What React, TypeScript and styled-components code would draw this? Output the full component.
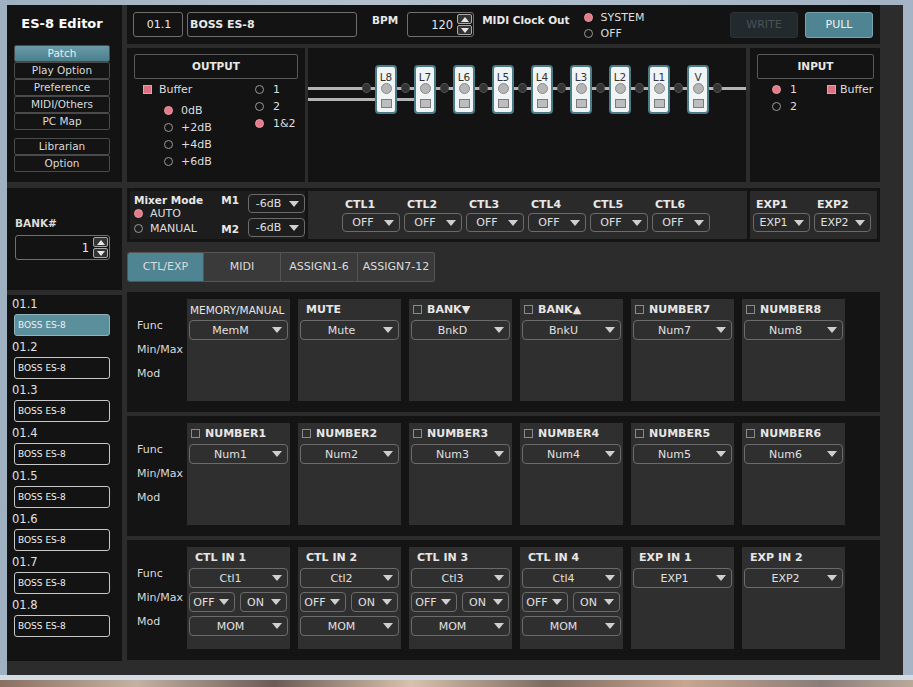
import React from "react";
import styled, { createGlobalStyle } from "styled-components";

const GlobalStyle = createGlobalStyle`
  html, body { margin: 0; padding: 0; }
  body {
    width: 913px;
    height: 687px;
    overflow: hidden;
    background: #a6b4c2;
    font-family: "DejaVu Sans", Verdana, sans-serif;
    font-size: 11px;
    color: #dcdcdc;
  }
  * { box-sizing: border-box; }
`;

const Window = styled.div`
  width: 913px;
  height: 687px;
  padding: 5px 0 0 7px;
  display: flex;
  flex-direction: column;
  background: linear-gradient(to right, #9fb0c0, #b2c0cd 40%, #a4b4c4);
`;

const AppBox = styled.div`
  width: 896px;
  height: 670px;
  background: #2c2c2c;
  display: flex;
  gap: 5px;
  padding: 0 23px 14px 0;
`;

const FrameBottom = styled.div`
  height: 5px;
  margin-left: -7px;
  background: #d3dce4;
`;

const Desktop = styled.div`
  flex: 1;
  margin-left: -7px;
  background: linear-gradient(
    to right,
    #8b7062,
    #c4b1a2 15%,
    #6c5a55 30%,
    #d8c2ad 45%,
    #7d6a60 60%,
    #c8a58e 75%,
    #8a7c78 90%,
    #b9a99b
  );
`;

/* ---------- left column ---------- */

const LeftCol = styled.div`
  width: 115px;
  display: flex;
  flex-direction: column;
  gap: 6px;
`;

const Panel = styled.div`
  background: #131313;
`;

const TitlePanel = styled(Panel)`
  height: 177px;
  padding: 11px 0 0 7px;
`;

const Title = styled.div`
  width: 96px;
  text-align: center;
  font-weight: bold;
  font-size: 13px;
  line-height: 16px;
  color: #fff;
  margin-bottom: 13px;
`;

const NavGroup = styled.div`
  display: flex;
  flex-direction: column;
  margin-bottom: 8px;
`;

const NavButton = styled.div<{ $active?: boolean }>`
  width: 96px;
  height: 17px;
  border: 1px solid #4a4a4a;
  border-radius: 2px;
  background: ${(p) =>
    p.$active ? "linear-gradient(#6a9ba7, #4b7f8c)" : "#141414"};
  color: ${(p) => (p.$active ? "#e6eef0" : "#dadada")};
  font-size: 10.5px;
  line-height: 15px;
  text-align: center;
`;

const BankPanel = styled(Panel)`
  height: 102px;
  padding: 28px 0 0 8px;
`;

const BankLabel = styled.div`
  font-weight: bold;
  font-size: 10.5px;
  line-height: 14px;
  margin-bottom: 5px;
`;

const NumInput = styled.div<{ $w: number }>`
  width: ${(p) => p.$w}px;
  height: 25px;
  border: 1px solid #707070;
  border-radius: 3px;
  display: flex;
  align-items: center;
  justify-content: flex-end;
  padding-right: 1px;
  gap: 4px;
  font-size: 11.5px;
  color: #e4e4e4;
`;

const Spinner = styled.div`
  display: flex;
  flex-direction: column;
  gap: 1px;
`;

const SpinHalf = styled.div<{ $up?: boolean }>`
  width: 15px;
  height: 10px;
  border: 1px solid #a8a8a8;
  border-radius: 2px;
  background: #333;
  display: flex;
  align-items: center;
  justify-content: center;
  &::after {
    content: "";
    border-left: 4px solid transparent;
    border-right: 4px solid transparent;
    ${(p) =>
      p.$up ? "border-bottom: 5px solid #e6e6e6;" : "border-top: 5px solid #e6e6e6;"}
  }
`;

const ListPanel = styled(Panel)`
  flex: 1;
  padding: 0 0 0 7px;
  margin-top: -1px;
`;

const PatchNo = styled.div`
  height: 19px;
  line-height: 19px;
  margin-left: -2px;
  font-size: 11.5px;
  color: #e0e0e0;
`;

const PatchBox = styled.div<{ $active?: boolean }>`
  width: 96px;
  height: 22px;
  margin-bottom: 2px;
  border: 1px solid ${(p) => (p.$active ? "#8fb4be" : "#c8c8c8")};
  border-radius: 3px;
  background: ${(p) => (p.$active ? "#5b8f9c" : "#131313")};
  padding-left: 3px;
  font-size: 9px;
  line-height: 20px;
  color: #f0f0f0;
`;

/* ---------- main column ---------- */

const MainCol = styled.div`
  width: 753px;
  display: flex;
  flex-direction: column;
`;

const Header = styled(Panel)`
  height: 39px;
  margin-bottom: 4px;
  display: flex;
  align-items: center;
  padding: 0 7px 0 6px;
`;

const Box = styled.div<{ $w: number; $bold?: boolean; $center?: boolean }>`
  width: ${(p) => p.$w}px;
  height: 25px;
  border: 1px solid #6e6e6e;
  border-radius: 3px;
  line-height: 23px;
  padding-left: 2px;
  text-align: ${(p) => (p.$center ? "center" : "left")};
  font-weight: ${(p) => (p.$bold ? "bold" : "normal")};
  color: #e8e8e8;
  margin-right: 4px;
`;

const HeadLabel = styled.span<{ $ml: number; $mr: number }>`
  font-weight: bold;
  font-size: 10.5px;
  color: #e8e8e8;
  margin-left: ${(p) => p.$ml}px;
  margin-right: ${(p) => p.$mr}px;
  align-self: flex-start;
  margin-top: 9px;
`;

const RadioStack = styled.div`
  display: flex;
  flex-direction: column;
  margin-top: 2px;
`;

const RadioRow = styled.div<{ $h?: number; $gap?: number }>`
  display: flex;
  align-items: center;
  gap: ${(p) => p.$gap ?? 8}px;
  height: ${(p) => p.$h ?? 17}px;
  font-size: 11px;
  color: #dedede;
`;

const Radio = styled.span<{ $on?: boolean }>`
  width: 9px;
  height: 9px;
  border-radius: 50%;
  flex-shrink: 0;
  background: ${(p) => (p.$on ? "#e47b8b" : "transparent")};
  border: 1px solid ${(p) => (p.$on ? "#ea99a4" : "#9a9a9a")};
`;

const Check = styled.span<{ $on?: boolean }>`
  width: 9px;
  height: 9px;
  flex-shrink: 0;
  background: ${(p) => (p.$on ? "#dc7281" : "transparent")};
  border: 1px solid ${(p) => (p.$on ? "#eb9ea8" : "#8a8a8a")};
`;

const Button = styled.div<{ $primary?: boolean }>`
  width: 68px;
  height: 26px;
  border-radius: 3px;
  border: 1px solid ${(p) => (p.$primary ? "#79a4af" : "#2d3438")};
  background: ${(p) => (p.$primary ? "#4f8492" : "#232a2d")};
  color: ${(p) => (p.$primary ? "#eef4f6" : "#485357")};
  text-align: center;
  line-height: 24px;
  font-size: 11px;
  margin-left: ${(p) => (p.$primary ? "7px" : "auto")};
`;

const Row1 = styled.div`
  height: 134px;
  display: flex;
  margin-bottom: 6px;
`;

const OutputPanel = styled(Panel)`
  width: 178px;
  margin-right: 3px;
  padding: 6px 7px 0 7px;
`;

const InputPanel = styled(Panel)`
  width: 130px;
  margin-left: 4px;
  padding: 6px 6px 0 7px;
`;

const PanelTitle = styled.div`
  height: 25px;
  border: 1px solid #5a5a5a;
  border-radius: 2px;
  text-align: center;
  line-height: 23px;
  font-weight: bold;
  font-size: 10.5px;
  color: #e8e8e8;
`;

const OutBody = styled.div`
  display: flex;
  padding: 2px 0 0 9px;
`;

const OutLeft = styled.div`
  width: 112px;
  display: flex;
  flex-direction: column;
`;

const DbList = styled.div`
  padding: 4px 0 0 21px;
  display: flex;
  flex-direction: column;
`;

const InBody = styled.div`
  display: flex;
  padding: 2px 0 0 15px;
`;

const InRadios = styled.div`
  width: 55px;
  display: flex;
  flex-direction: column;
`;

const ChainPanel = styled(Panel)`
  width: 438px;
  position: relative;
  padding: 17px 0 0 54px;
`;

const Rail = styled.div<{ $top: number; $w?: number }>`
  position: absolute;
  left: 0;
  top: ${(p) => p.$top}px;
  width: ${(p) => (p.$w ? `${p.$w}px` : "100%")};
  height: 3px;
  background: #b4b4b4;
`;

const ChainRow = styled.div`
  position: relative;
  display: flex;
  align-items: flex-start;
  gap: 4px;
`;

const ChainDot = styled.span`
  width: 9px;
  height: 10px;
  margin-top: 18px;
  border-radius: 50%;
  background: #343434;
  border: 1px solid #555;
`;

const Effect = styled.div`
  width: 22px;
  height: 49px;
  border: 2px solid #4b7d89;
  border-radius: 4px;
  background: #f1f4f5;
  display: flex;
  flex-direction: column;
  align-items: center;
`;

const EffectName = styled.span`
  font-size: 10.5px;
  line-height: 12px;
  margin-top: 4px;
  color: #333;
`;

const Knob = styled.span`
  width: 11px;
  height: 11px;
  border-radius: 50%;
  background: #b6b6b6;
  border: 1px solid #8a8a8a;
`;

const Pad = styled.span`
  width: 11px;
  height: 9px;
  margin-top: 5px;
  background: #bdbdbd;
  border: 1px solid #7a7a7a;
`;

/* ---------- mixer / ctl strip ---------- */

const Strip = styled.div`
  height: 54px;
  background: #141414;
  padding: 3px;
  display: flex;
  gap: 3px;
`;

const MixerPanel = styled.div`
  width: 175px;
  background: #1d1d1d;
  display: flex;
  padding: 3px 0 0 4px;
`;

const MixerLeft = styled.div`
  width: 88px;
`;

const SmallBold = styled.div`
  font-weight: bold;
  font-size: 10.5px;
  line-height: 12px;
  color: #e8e8e8;
`;

const MixerRight = styled.div`
  display: flex;
  flex-direction: column;
  gap: 5px;
`;

const MRow = styled.div<{ $lt?: number }>`
  display: flex;
  align-items: flex-start;
  gap: 9px;
  ${SmallBold} {
    margin-top: ${(p) => p.$lt ?? 0}px;
  }
`;

const CtlPanel = styled.div<{ $w: number; $pl: number }>`
  width: ${(p) => p.$w}px;
  background: #2a2a2a;
  display: flex;
  gap: 4px;
  padding: 8px 0 0 ${(p) => p.$pl}px;
`;

const CtlCol = styled.div`
  display: flex;
  flex-direction: column;
  gap: 2px;
  ${SmallBold} {
    padding-left: 3px;
    font-size: 11px;
  }
`;

const Sel = styled.div<{ $w?: number; $h?: number }>`
  width: ${(p) => (p.$w ? `${p.$w}px` : "100%")};
  height: ${(p) => p.$h ?? 20}px;
  flex-shrink: 0;
  border: 1px solid #6b6b6b;
  border-radius: 4px;
  display: flex;
  align-items: center;
  gap: 3px;
  padding: 0 5px 0 2px;
  font-size: 11px;
  color: #e0e0e0;
`;

const SelText = styled.span`
  flex: 1;
  text-align: center;
  white-space: nowrap;
`;

const Arrow = styled.span`
  width: 0;
  height: 0;
  flex-shrink: 0;
  border-left: 5px solid transparent;
  border-right: 5px solid transparent;
  border-top: 6px solid #cfcfcf;
`;

const Select = ({ value, w, h }: { value: string; w?: number; h?: number }) => (
  <Sel $w={w} $h={h}>
    <SelText>{value}</SelText>
    <Arrow />
  </Sel>
);

/* ---------- tabs ---------- */

const TabBar = styled.div`
  display: flex;
  padding: 10px 0;
`;

const Tab = styled.div<{ $active?: boolean }>`
  width: 77px;
  height: 30px;
  border: 1px solid #555;
  border-left-width: ${(p) => (p.$active ? 1 : 0)}px;
  background: ${(p) => (p.$active ? "#4f8492" : "#3a3a3a")};
  color: #dcdcdc;
  text-align: center;
  line-height: 28px;
  font-size: 11px;
  &:first-child {
    border-radius: 3px 0 0 3px;
  }
  &:last-child {
    border-radius: 0 3px 3px 0;
  }
`;

/* ---------- assign sections ---------- */

const Sections = styled.div`
  display: flex;
  flex-direction: column;
  gap: 4px;
`;

const Section = styled.div`
  height: 120px;
  background: #141414;
  display: flex;
  padding: 7px 0 0 10px;
`;

const LabelCol = styled.div`
  width: 50px;
  padding-top: 17px;
  display: flex;
  flex-direction: column;
  gap: 4px;
`;

const RowLabel = styled.div`
  height: 20px;
  line-height: 20px;
  font-size: 11px;
  color: #dadada;
  white-space: nowrap;
`;

const Cards = styled.div`
  display: flex;
  gap: 8px;
`;

const Card = styled.div`
  width: 103px;
  height: 102px;
  background: #2f2f2f;
  padding: 0 2px;
  display: flex;
  flex-direction: column;
  gap: 4px;
`;

const CardHead = styled.div<{ $bold?: boolean; $indent: number }>`
  height: 13px;
  display: flex;
  align-items: center;
  gap: 5px;
  padding-left: ${(p) => p.$indent}px;
  padding-top: 4px;
  box-sizing: content-box;
  font-weight: ${(p) => (p.$bold ? "bold" : "normal")};
  font-size: ${(p) => (p.$bold ? "11px" : "10.5px")};
  color: #e6e6e6;
  white-space: nowrap;
`;

const SelPair = styled.div`
  display: flex;
  gap: 5px;
`;

type CardDef = {
  title: string;
  kind: "plain" | "bold" | "check";
  func: string;
  ctl?: boolean;
};

const sec1: CardDef[] = [
  { title: "MEMORY/MANUAL", kind: "plain", func: "MemM" },
  { title: "MUTE", kind: "bold", func: "Mute" },
  { title: "BANK▼", kind: "check", func: "BnkD" },
  { title: "BANK▲", kind: "check", func: "BnkU" },
  { title: "NUMBER7", kind: "check", func: "Num7" },
  { title: "NUMBER8", kind: "check", func: "Num8" },
];

const sec2: CardDef[] = [1, 2, 3, 4, 5, 6].map((n) => ({
  title: `NUMBER${n}`,
  kind: "check",
  func: `Num${n}`,
}));

const sec3: CardDef[] = [
  ...[1, 2, 3, 4].map((n) => ({
    title: `CTL IN ${n}`,
    kind: "bold" as const,
    func: `Ctl${n}`,
    ctl: true,
  })),
  { title: "EXP IN 1", kind: "bold", func: "EXP1" },
  { title: "EXP IN 2", kind: "bold", func: "EXP2" },
];

const AssignCard = ({ c }: { c: CardDef }) => (
  <Card>
    <CardHead
      $bold={c.kind !== "plain"}
      $indent={c.kind === "plain" ? 1 : c.kind === "check" ? 2 : 6}
    >
      {c.kind === "check" && <Check />}
      {c.title}
    </CardHead>
    <Select value={c.func} />
    {c.ctl && (
      <>
        <SelPair>
          <Select value="OFF" w={46} />
          <Select value="ON" w={47} />
        </SelPair>
        <Select value="MOM" />
      </>
    )}
  </Card>
);

const AssignSection = ({ cards }: { cards: CardDef[] }) => (
  <Section>
    <LabelCol>
      <RowLabel>Func</RowLabel>
      <RowLabel>Min/Max</RowLabel>
      <RowLabel>Mod</RowLabel>
    </LabelCol>
    <Cards>
      {cards.map((c) => (
        <AssignCard key={c.title} c={c} />
      ))}
    </Cards>
  </Section>
);

const chain = ["L8", "L7", "L6", "L5", "L4", "L3", "L2", "L1", "V"];

export default function App() {
  return (
    <>
      <GlobalStyle />
      <Window>
        <AppBox>
          <LeftCol>
            <TitlePanel>
              <Title>ES-8 Editor</Title>
              <NavGroup>
                {["Patch", "Play Option", "Preference", "MIDI/Others", "PC Map"].map(
                  (n, i) => (
                    <NavButton key={n} $active={i === 0}>
                      {n}
                    </NavButton>
                  )
                )}
              </NavGroup>
              <NavGroup>
                <NavButton>Librarian</NavButton>
                <NavButton>Option</NavButton>
              </NavGroup>
            </TitlePanel>
            <BankPanel>
              <BankLabel>BANK#</BankLabel>
              <NumInput $w={95}>
                1
                <Spinner>
                  <SpinHalf $up />
                  <SpinHalf />
                </Spinner>
              </NumInput>
            </BankPanel>
            <ListPanel>
              {[1, 2, 3, 4, 5, 6, 7, 8].map((n) => (
                <div key={n}>
                  <PatchNo>01.{n}</PatchNo>
                  <PatchBox $active={n === 1}>BOSS ES-8</PatchBox>
                </div>
              ))}
            </ListPanel>
          </LeftCol>

          <MainCol>
            <Header>
              <Box $w={50} $center>
                01.1
              </Box>
              <Box $w={170} $bold>
                BOSS ES-8
              </Box>
              <HeadLabel $ml={11} $mr={9}>
                BPM
              </HeadLabel>
              <NumInput $w={67}>
                120
                <Spinner>
                  <SpinHalf $up />
                  <SpinHalf />
                </Spinner>
              </NumInput>
              <HeadLabel $ml={8} $mr={14}>
                MIDI Clock Out
              </HeadLabel>
              <RadioStack>
                <RadioRow $h={16}>
                  <Radio $on />
                  SYSTEM
                </RadioRow>
                <RadioRow $h={16}>
                  <Radio />
                  OFF
                </RadioRow>
              </RadioStack>
              <Button>WRITE</Button>
              <Button $primary>PULL</Button>
            </Header>

            <Row1>
              <OutputPanel>
                <PanelTitle>OUTPUT</PanelTitle>
                <OutBody>
                  <OutLeft>
                    <RadioRow $gap={7}>
                      <Check $on />
                      Buffer
                    </RadioRow>
                    <DbList>
                      {["0dB", "+2dB", "+4dB", "+6dB"].map((d, i) => (
                        <RadioRow key={d}>
                          <Radio $on={i === 0} />
                          {d}
                        </RadioRow>
                      ))}
                    </DbList>
                  </OutLeft>
                  <div>
                    {["1", "2", "1&2"].map((d, i) => (
                      <RadioRow key={d} $gap={9}>
                        <Radio $on={i === 2} />
                        {d}
                      </RadioRow>
                    ))}
                  </div>
                </OutBody>
              </OutputPanel>

              <ChainPanel>
                <Rail $top={39} />
                <Rail $top={50} $w={107} />
                <ChainRow>
                  {chain.map((c) => (
                    <React.Fragment key={c}>
                      <ChainDot />
                      <Effect>
                        <EffectName>{c}</EffectName>
                        <Knob />
                        <Pad />
                      </Effect>
                    </React.Fragment>
                  ))}
                  <ChainDot />
                </ChainRow>
              </ChainPanel>

              <InputPanel>
                <PanelTitle>INPUT</PanelTitle>
                <InBody>
                  <InRadios>
                    <RadioRow $gap={9}>
                      <Radio $on />1
                    </RadioRow>
                    <RadioRow $gap={9}>
                      <Radio />2
                    </RadioRow>
                  </InRadios>
                  <RadioRow $gap={4}>
                    <Check $on />
                    Buffer
                  </RadioRow>
                </InBody>
              </InputPanel>
            </Row1>

            <Strip>
              <MixerPanel>
                <MixerLeft>
                  <SmallBold>Mixer Mode</SmallBold>
                  <RadioRow $h={15} $gap={7}>
                    <Radio $on />
                    AUTO
                  </RadioRow>
                  <RadioRow $h={15} $gap={7}>
                    <Radio />
                    MANUAL
                  </RadioRow>
                </MixerLeft>
                <MixerRight>
                  <MRow>
                    <SmallBold>M1</SmallBold>
                    <Select value="-6dB" w={57} h={19} />
                  </MRow>
                  <MRow $lt={5}>
                    <SmallBold>M2</SmallBold>
                    <Select value="-6dB" w={57} h={19} />
                  </MRow>
                </MixerRight>
              </MixerPanel>
              <CtlPanel $w={439} $pl={34}>
                {[1, 2, 3, 4, 5, 6].map((n) => (
                  <CtlCol key={n}>
                    <SmallBold>CTL{n}</SmallBold>
                    <Select value="OFF" w={58} h={19} />
                  </CtlCol>
                ))}
              </CtlPanel>
              <CtlPanel $w={127} $pl={3}>
                {[1, 2].map((n) => (
                  <CtlCol key={n}>
                    <SmallBold>EXP{n}</SmallBold>
                    <Select value={`EXP${n}`} w={57} h={19} />
                  </CtlCol>
                ))}
              </CtlPanel>
            </Strip>

            <TabBar>
              <Tab $active>CTL/EXP</Tab>
              <Tab>MIDI</Tab>
              <Tab>ASSIGN1-6</Tab>
              <Tab>ASSIGN7-12</Tab>
            </TabBar>

            <Sections>
              <AssignSection cards={sec1} />
              <AssignSection cards={sec2} />
              <AssignSection cards={sec3} />
            </Sections>
          </MainCol>
        </AppBox>
        <FrameBottom />
        <Desktop />
      </Window>
    </>
  );
}
